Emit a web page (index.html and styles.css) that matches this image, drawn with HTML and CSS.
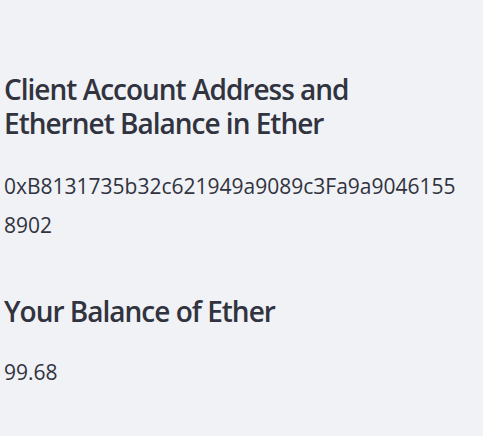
FILE: index.html
```html
<!DOCTYPE html>
<html>
<head>
<meta charset="utf-8">
<link rel="stylesheet" href="styles.css">
</head>
<body>
<div class="page">
  <aside class="sidebar">
    <h3 class="heading first">Client Account Address and Ethernet Balance in Ether</h3>
    <p class="text address">0xB8131735b32c621949a9089c3Fa9a90461558902</p>
    <h3 class="heading second">Your Balance of Ether</h3>
    <p class="text balance">99.68</p>
  </aside>
  <div class="edge"></div>
</div>
</body>
</html>
```
FILE: styles.css
```css
html, body {
  margin: 0;
  padding: 0;
  height: 100%;
}
body {
  font-family: "Open Sans", "Noto Sans", sans-serif;
  color: #31333f;
  background: #ffffff;
}
.page {
  display: flex;
  height: 436px;
}
.sidebar {
  width: 483px;
  flex: none;
  background: #f0f2f6;
  padding: 72px 0 0 4px;
  box-sizing: border-box;
}
.edge {
  flex: 1;
  background: #ffffff;
}
.heading {
  margin: 0;
  font-size: 28px;
  line-height: 34px;
  font-weight: 600;
  letter-spacing: -1px;
  width: 360px;
}
.text {
  margin: 0;
  font-size: 21px;
  line-height: 39px;
  letter-spacing: 0;
  width: 456px;
  word-break: break-all;
}
.address {
  margin-top: 27px;
}
.second {
  margin-top: 49px;
}
.balance {
  margin-top: 25px;
}
```
